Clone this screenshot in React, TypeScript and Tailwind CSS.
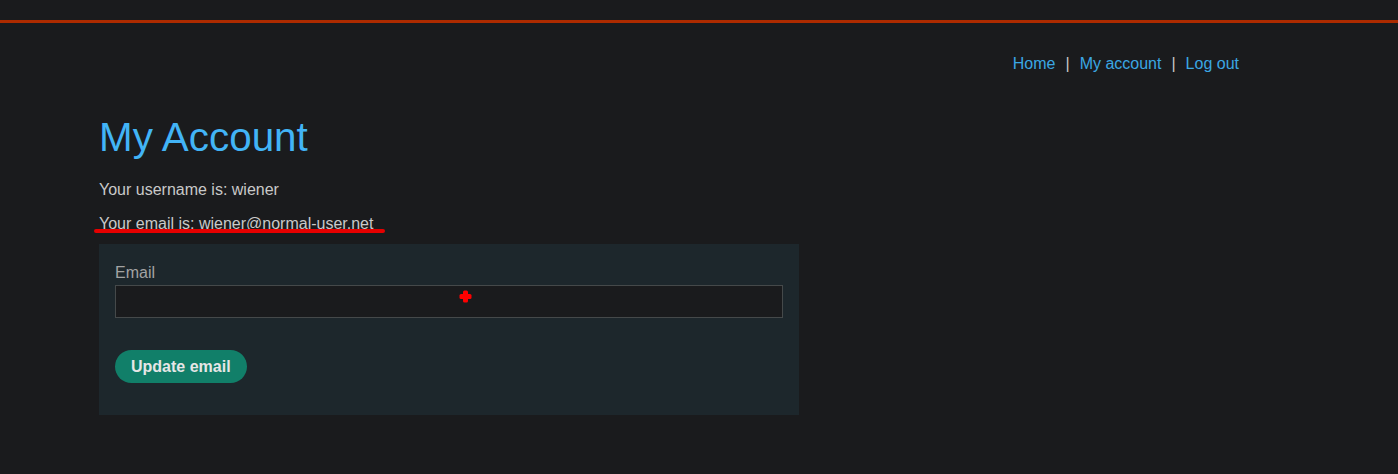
import React from 'react';

const NavLink: React.FC<{ label: string }> = ({ label }) => (
  <a href="#" className="text-[#3ba7e3] hover:underline">
    {label}
  </a>
);

const Separator = () => <span className="mx-[10px] text-[#c8c8c8]">|</span>;

const App: React.FC = () => {
  return (
    <div className="min-h-[474px] bg-[#1a1b1d] pt-[20px] font-['Liberation_Sans',Arial,sans-serif] text-[16px] leading-6">
      <div className="h-[3px] bg-[#ad2b00]" />

      <div className="ml-[99px] w-[1140px]">
        <nav className="mt-[29px] flex justify-end">
          <NavLink label="Home" />
          <Separator />
          <NavLink label="My account" />
          <Separator />
          <NavLink label="Log out" />
        </nav>

        <h1 className="mt-[37px] text-[40.4px] leading-[48px] font-normal text-[#42b4f6]">My Account</h1>

        <p className="mt-[17px] text-[#c9c9c9]">Your username is: wiener</p>
        <p className="relative mt-[10px] text-[#c9c9c9]">
          Your email is: wiener@normal-user.net
          {/* red annotation stroke */}
          <span className="absolute left-[-5px] top-[17px] h-[4px] w-[291px] rounded-full bg-[#e60000]" />
        </p>

        <form className="mt-[8px] w-[700px] bg-[#1d272c] px-4 pt-[17px] pb-[32px]">
          <label className="block text-[#a3a3a3]">Email</label>
          <div className="relative">
            <input
              type="email"
              className="block h-[33px] w-full border border-[#45494a] bg-[#1a1b1d] px-2 text-[#c9c9c9] outline-none"
            />
            <svg
              className="absolute left-[344px] top-[5px]"
              width="13"
              height="13"
              viewBox="0 0 13 13"
            >
              <rect x="4" y="0.5" width="5" height="12" rx="1.5" fill="#ff0000" />
              <rect x="0.5" y="4" width="12" height="5" rx="1.5" fill="#ff0000" />
            </svg>
          </div>
          <button
            type="button"
            className="mt-[32px] flex h-[33px] items-center rounded-full bg-[#117f69] px-4 font-bold text-[#e6e6e6]"
          >
            Update email
          </button>
        </form>
      </div>
    </div>
  );
};

export default App;
